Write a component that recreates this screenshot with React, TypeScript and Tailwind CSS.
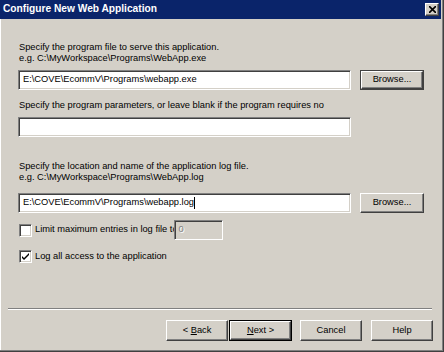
import React from "react";

const sunken =
  "border border-[#808080] border-r-white border-b-white shadow-[inset_1px_1px_#404040,inset_-1px_-1px_#d4d0c8]";
const raised =
  "border border-white border-r-[#404040] border-b-[#404040] shadow-[inset_-1px_-1px_#808080]";

const Button: React.FC<{ children: React.ReactNode; def?: boolean; className?: string }> = ({
  children,
  def,
  className,
}) => {
  if (def) {
    return (
      <div className={`border border-black ${className ?? ""}`}>
        <div className={`${raised} w-full h-full flex items-center justify-center`}>{children}</div>
      </div>
    );
  }
  return <div className={`${raised} flex items-center justify-center ${className ?? ""}`}>{children}</div>;
};

const Checkbox: React.FC<{ checked?: boolean }> = ({ checked }) => (
  <div className={`${sunken} w-[13px] h-[13px] bg-white flex items-center justify-center shrink-0`}>
    {checked && (
      <svg width="7" height="7" viewBox="0 0 7 7">
        <path d="M0 3 L2 5 L7 0 L7 2 L2 7 L0 5 Z" fill="#000" />
      </svg>
    )}
  </div>
);

const App: React.FC = () => {
  return (
    <div className="w-[444px] h-[352px] bg-[#d4d0c8] flex flex-col overflow-hidden text-black font-['Liberation_Sans',Arial,sans-serif] text-[9.3px] shadow-[inset_-1px_-1px_#404040,inset_-2px_-2px_#808080,inset_1px_0_#ffffff]">
      <div className="h-[19px] mr-[3px] bg-[#0a246a] flex items-center justify-between pl-[3px] pr-[2px]">
        <span className="text-white font-bold text-[10.2px] leading-none">Configure New Web Application</span>
        <div className={`${raised} w-[14px] h-[13px] bg-[#d4d0c8] flex items-center justify-center`}>
          <svg width="7" height="7" viewBox="0 0 7 7">
            <path d="M0 0 L7 7 M7 0 L0 7" stroke="#000" strokeWidth="1.6" />
          </svg>
        </div>
      </div>

      <div className="flex flex-col pl-[18px] flex-1">
        <div className="mt-[23px] pl-[1px] leading-[11px]">
          <div>Specify the program file to serve this application.</div>
          <div>e.g. C:\MyWorkspace\Programs\WebApp.exe</div>
        </div>
        <div className="mt-[6px] flex items-center gap-[9px]">
          <div className={`${sunken} w-[333px] h-[20px] bg-white flex items-center pl-[4px]`}>
            E:\COVE\EcommV\Programs\webapp.exe
          </div>
          <div className="border border-[#404040] w-[64px] h-[20px]">
            <div className={`${raised} w-full h-full flex items-center justify-center`}>Browse...</div>
          </div>
        </div>

        <div className="mt-[9px] pl-[1px] leading-[12px]">
          Specify the program parameters, or leave blank if the program requires no
        </div>
        <div className={`${sunken} mt-[6px] w-[333px] h-[20px] bg-white`} />

        <div className="mt-[24px] pl-[1px] leading-[11px]">
          <div>Specify the location and name of the application log file.</div>
          <div>e.g. C:\MyWorkspace\Programs\WebApp.log</div>
        </div>
        <div className="mt-[10px] flex items-center gap-[9px]">
          <div className={`${sunken} w-[333px] h-[20px] bg-white flex items-center pl-[4px]`}>
            <span>E:\COVE\EcommV\Programs\webapp.log</span>
            <span className="w-[1px] h-[12px] bg-black" />
          </div>
          <Button className="w-[64px] h-[20px]">Browse...</Button>
        </div>

        <div className="mt-[7px] flex items-center h-[20px] pl-[1px]">
          <Checkbox />
          <span className="pl-[3px] whitespace-nowrap">Limit maximum entries in log file to</span>
          {/* the disabled field sits over the end of its label, as in the dialog */}
          <div
            className={`${sunken} relative z-10 ml-[-4px] w-[49px] h-[20px] bg-[#d4d0c8] flex items-center pl-[4px] text-[#808080] [text-shadow:1px_1px_#ffffff]`}
          >
            0
          </div>
        </div>

        <div className="mt-[10px] flex items-center h-[13px] pl-[1px]">
          <Checkbox checked />
          <span className="pl-[3px]">Log all access to the application</span>
        </div>

        <div className="mt-auto ml-[-10px] mr-[12px] h-[2px] border-t border-[#808080] border-b border-b-white" />

        <div className="mt-[10px] mb-[11px] flex justify-end pr-[11px]">
          <Button className="w-[62px] h-[21px]">
            &lt;&nbsp;<span className="underline">B</span>ack
          </Button>
          <Button def className="w-[63px] h-[21px] ml-[1px]">
            <span>
              <span className="underline">N</span>ext &gt;
            </span>
          </Button>
          <Button className="w-[62px] h-[21px] ml-[8px]">Cancel</Button>
          <Button className="w-[62px] h-[21px] ml-[9px]">Help</Button>
        </div>
      </div>
    </div>
  );
};

export default App;
